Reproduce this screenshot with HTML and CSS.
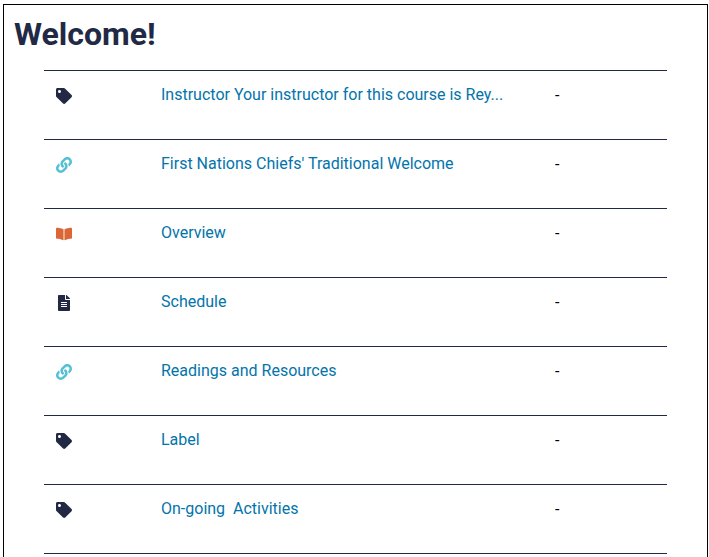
FILE: index.html
```html
<!DOCTYPE html>
<html lang="en">
<head>
<meta charset="utf-8">
<title>Welcome!</title>
<link rel="stylesheet" href="styles.css">
</head>
<body>
<svg width="0" height="0" class="defs">
  <symbol id="tag" viewBox="0 0 512 512"><path d="M0 252.118V48C0 21.490 21.490 0 48 0h204.118a48 48 0 0 1 33.941 14.059l211.882 211.882c18.745 18.745 18.745 49.137 0 67.882L293.823 497.941c-18.745 18.745-49.137 18.745-67.882 0L14.059 286.059A48 48 0 0 1 0 252.118zM112 64c-26.510 0-48 21.490-48 48s21.490 48 48 48 48-21.490 48-48-21.490-48-48-48z"/></symbol>
  <symbol id="link" viewBox="0 0 512 512"><path d="M326.612 185.391c59.747 59.809 58.927 155.698.36 214.590-.11.120-.240.250-.360.370l-67.200 67.200c-59.270 59.270-155.699 59.262-214.960 0-59.270-59.260-59.270-155.700 0-214.960l37.106-37.106c9.840-9.840 26.786-3.300 27.294 10.606.648 17.722 3.826 35.527 9.690 52.721 1.986 5.822.567 12.262-3.783 16.612l-13.087 13.087c-28.026 28.026-28.905 73.660-1.155 101.960 28.024 28.579 74.086 28.749 102.325.510l67.200-67.190c28.191-28.191 28.073-73.757 0-101.830-3.701-3.694-7.429-6.564-10.341-8.569a16.037 16.037 0 0 1-6.947-12.606c-.396-10.567 3.348-21.456 11.698-29.806l21.054-21.055c5.521-5.521 14.182-6.199 20.584-1.731a152.482 152.482 0 0 1 20.522 17.197zM467.547 44.449c-59.261-59.262-155.690-59.270-214.960 0l-67.200 67.200c-.120.120-.250.250-.360.370-58.566 58.892-59.387 154.781.360 214.590a152.454 152.454 0 0 0 20.521 17.196c6.402 4.468 15.064 3.789 20.584-1.731l21.054-21.055c8.350-8.350 12.094-19.239 11.698-29.806a16.037 16.037 0 0 0-6.947-12.606c-2.912-2.005-6.640-4.875-10.341-8.569-28.073-28.073-28.191-73.639 0-101.830l67.200-67.190c28.239-28.239 74.300-28.069 102.325.510 27.750 28.300 26.872 73.934-1.155 101.960l-13.087 13.087c-4.350 4.350-5.769 10.790-3.783 16.612 5.864 17.194 9.042 34.999 9.690 52.721.509 13.906 17.454 20.446 27.294 10.606l37.106-37.106c59.271-59.259 59.271-155.699.001-214.959z"/></symbol>
  <symbol id="book" viewBox="0 0 576 512"><path d="M542.220 32.050c-54.800 3.110-163.720 14.430-230.960 55.590-4.640 2.840-7.270 7.890-7.270 13.170v363.870c0 11.550 12.630 18.850 23.280 13.490 69.180-34.820 169.230-44.320 218.700-46.920 16.890-.890 30.020-14.430 30.020-30.660V62.750c.010-17.710-15.350-31.740-33.770-30.700zM264.730 87.640C197.500 46.480 88.580 35.170 33.780 32.050 15.360 31.010 0 45.040 0 62.750V400.600c0 16.240 13.130 29.780 30.020 30.660 49.490 2.600 149.590 12.110 218.770 46.950 10.620 5.350 23.210-1.940 23.210-13.460V100.630c0-5.290-2.620-10.140-7.270-12.990z"/></symbol>
  <symbol id="file" viewBox="0 0 384 512"><path d="M224 136V0H24C10.700 0 0 10.700 0 24v464c0 13.300 10.700 24 24 24h336c13.300 0 24-10.700 24-24V160H248c-13.200 0-24-10.800-24-24zm64 236c0 6.600-5.400 12-12 12H108c-6.600 0-12-5.400-12-12v-8c0-6.600 5.400-12 12-12h168c6.600 0 12 5.400 12 12v8zm0-64c0 6.600-5.400 12-12 12H108c-6.600 0-12-5.400-12-12v-8c0-6.600 5.400-12 12-12h168c6.600 0 12 5.400 12 12v8zm0-72v8c0 6.600-5.400 12-12 12H108c-6.600 0-12-5.400-12-12v-8c0-6.600 5.400-12 12-12h168c6.600 0 12 5.400 12 12zm96-114.100v6.100H256V0h6.100c6.400 0 12.500 2.500 17 7l97.900 98c4.500 4.500 7 10.600 7 16.900z"/></symbol>
</svg>
<main class="panel">
  <h1>Welcome!</h1>
  <ul class="items">
    <li><svg class="icon"><use href="#tag"/></svg><a>Instructor Your instructor for this course is Rey...</a><span>-</span></li>
    <li><svg class="icon link"><use href="#link"/></svg><a>First Nations Chiefs' Traditional Welcome</a><span>-</span></li>
    <li><svg class="icon book"><use href="#book"/></svg><a>Overview</a><span>-</span></li>
    <li><svg class="icon"><use href="#file"/></svg><a>Schedule</a><span>-</span></li>
    <li><svg class="icon link"><use href="#link"/></svg><a>Readings and Resources</a><span>-</span></li>
    <li><svg class="icon"><use href="#tag"/></svg><a>Label</a><span>-</span></li>
    <li><svg class="icon"><use href="#tag"/></svg><a>On-going&nbsp; Activities</a><span>-</span></li>
  </ul>
</main>
</body>
</html>
```
FILE: styles.css
```css
* { box-sizing: border-box; }
body {
  margin: 0;
  height: 557px;
  overflow: hidden;
  padding: 4px 1px 0 3px;
  background: #fff;
  font: 16px/24px Roboto, sans-serif;
  color: #000;
}
.defs { display: none; }
.panel {
  height: 570px;
  border: 1px solid #000;
  padding: 9px 40px 0 10px;
}
h1 { margin: 0; font-size: 32px; line-height: 40px; font-weight: 700; color: #222945; }
.items {
  list-style: none;
  margin: 16px 0 0 30px;
  padding: 0;
  border-bottom: 1px solid #222945;
}
.items li {
  display: grid;
  grid-template-columns: 117px 394px 1fr;
  height: 69px;
  padding-top: 12px;
  border-top: 1px solid #222945;
}
.items span { padding-top: 1px; }
.icon { width: 16px; height: 16px; margin: 5px 0 0 12px; fill: #222945; }
.icon.link { fill: #54c0d6; }
.icon.book { fill: #da6737; }
a { color: #0374ab; }
```
